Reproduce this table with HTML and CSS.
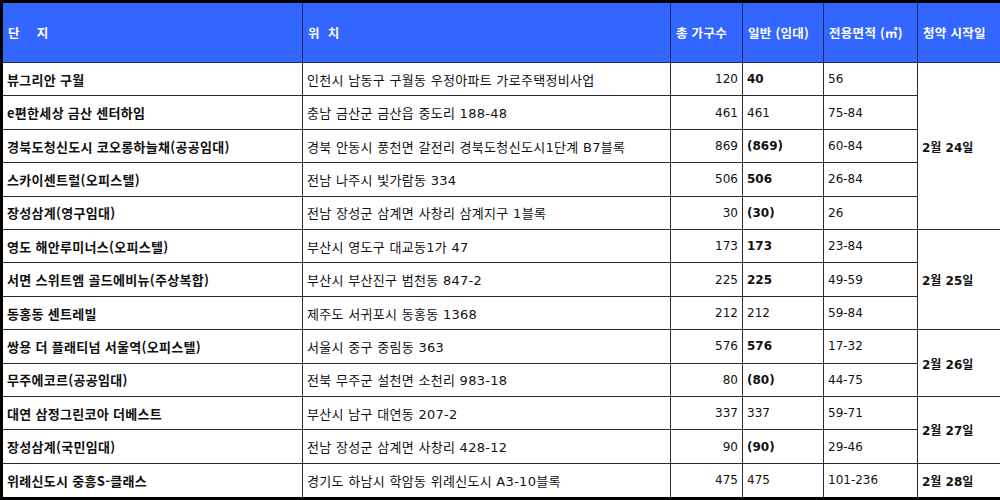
FILE: index.html
```html
<!DOCTYPE html>
<html lang="ko">
<head>
<meta charset="utf-8">
<link rel="stylesheet" href="styles.css">
</head>
<body>
<table class="grid">
  <colgroup>
    <col class="c1"><col class="c2"><col class="c3"><col class="c4"><col class="c5"><col class="c6">
  </colgroup>
  <thead>
    <tr class="head">
      <th><span class="spaced">단</span>지</th>
      <th><span class="spaced-sm">위</span>치</th>
      <th>총 가구수</th>
      <th>일반 (임대)</th>
      <th>전용면적 (㎡)</th>
      <th>청약 시작일</th>
    </tr>
  </thead>
  <tbody>
    <tr><td class="name">뷰그리안 구월</td><td class="loc">인천시 남동구 구월동 우정아파트 가로주택정비사업</td><td class="total">120</td><td class="gen">40</td><td class="area">56</td><td class="date" rowspan="5">2월 24일</td></tr>
    <tr><td class="name">e편한세상 금산 센터하임</td><td class="loc">충남 금산군 금산읍 중도리 188-48</td><td class="total">461</td><td class="gen plain">461</td><td class="area">75-84</td></tr>
    <tr><td class="name">경북도청신도시 코오롱하늘채(공공임대)</td><td class="loc">경북 안동시 풍천면 갈전리 경북도청신도시1단계 B7블록</td><td class="total">869</td><td class="gen">(869)</td><td class="area">60-84</td></tr>
    <tr><td class="name">스카이센트럴(오피스텔)</td><td class="loc">전남 나주시 빛가람동 334</td><td class="total">506</td><td class="gen">506</td><td class="area">26-84</td></tr>
    <tr><td class="name">장성삼계(영구임대)</td><td class="loc">전남 장성군 삼계면 사창리 삼계지구 1블록</td><td class="total">30</td><td class="gen">(30)</td><td class="area">26</td></tr>
    <tr><td class="name">영도 해안루미너스(오피스텔)</td><td class="loc">부산시 영도구 대교동1가 47</td><td class="total">173</td><td class="gen">173</td><td class="area">23-84</td><td class="date" rowspan="3">2월 25일</td></tr>
    <tr><td class="name">서면 스위트엠 골드에비뉴(주상복합)</td><td class="loc">부산시 부산진구 범천동 847-2</td><td class="total">225</td><td class="gen">225</td><td class="area">49-59</td></tr>
    <tr><td class="name">동홍동 센트레빌</td><td class="loc">제주도 서귀포시 동홍동 1368</td><td class="total">212</td><td class="gen plain">212</td><td class="area">59-84</td></tr>
    <tr><td class="name">쌍용 더 플래티넘 서울역(오피스텔)</td><td class="loc">서울시 중구 중림동 363</td><td class="total">576</td><td class="gen">576</td><td class="area">17-32</td><td class="date" rowspan="2">2월 26일</td></tr>
    <tr><td class="name">무주에코르(공공임대)</td><td class="loc">전북 무주군 설천면 소천리 983-18</td><td class="total">80</td><td class="gen">(80)</td><td class="area">44-75</td></tr>
    <tr><td class="name">대연 삼정그린코아 더베스트</td><td class="loc">부산시 남구 대연동 207-2</td><td class="total">337</td><td class="gen plain">337</td><td class="area">59-71</td><td class="date" rowspan="2">2월 27일</td></tr>
    <tr><td class="name">장성삼계(국민임대)</td><td class="loc">전남 장성군 삼계면 사창리 428-12</td><td class="total">90</td><td class="gen">(90)</td><td class="area">29-46</td></tr>
    <tr><td class="name">위례신도시 중흥S-클래스</td><td class="loc">경기도 하남시 학암동 위례신도시 A3-10블록</td><td class="total">475</td><td class="gen plain">475</td><td class="area">101-236</td><td class="date">2월 28일</td></tr>
  </tbody>
</table>
</body>
</html>
```

FILE: styles.css
```css
html, body {
  margin: 0;
  padding: 0;
  background: #ffffff;
}

.grid {
  width: 1000px;
  height: 500px;
  border-collapse: collapse;
  table-layout: fixed;
  border: 3px solid #000000;
  font-family: "DejaVu Sans", "Noto Sans CJK KR", sans-serif;
  font-size: 12px;
  color: #111111;
}

.c1 { width: 301px; }
.c2 { width: 368px; }
.c3 { width: 72px; }
.c4 { width: 81px; }
.c5 { width: 94px; }
.c6 { width: 84px; }

.grid th,
.grid td {
  border: 1px solid #2a2a2a;
  padding: 0 4px;
  white-space: nowrap;
  overflow: hidden;
  vertical-align: middle;
}

.head {
  height: 61px;
}

.grid th {
  background: #3366ff;
  color: #ffffff;
  font-family: "Noto Sans CJK KR", sans-serif;
  font-weight: 700;
  font-size: 12.5px;
  letter-spacing: 0.3px;
  text-align: left;
  padding-left: 5px;
  border-color: #1a2a66;
}

.spaced {
  margin-right: 17px;
}

.spaced-sm {
  margin-right: 8px;
}

.name {
  font-family: "Noto Sans CJK KR", sans-serif;
  font-weight: 700;
  font-size: 13px;
  letter-spacing: 0.3px;
}

.loc {
  font-family: "DejaVu Sans", "Noto Sans CJK KR", sans-serif;
  font-weight: 400;
  font-size: 13px;
  letter-spacing: 0.3px;
}

.total {
  text-align: right;
  padding-right: 13px;
}

.gen {
  font-weight: 700;
}

.gen.plain {
  font-weight: 400;
}

.date {
  font-family: "DejaVu Sans", "Noto Sans CJK KR", sans-serif;
  font-weight: 700;
}
```
